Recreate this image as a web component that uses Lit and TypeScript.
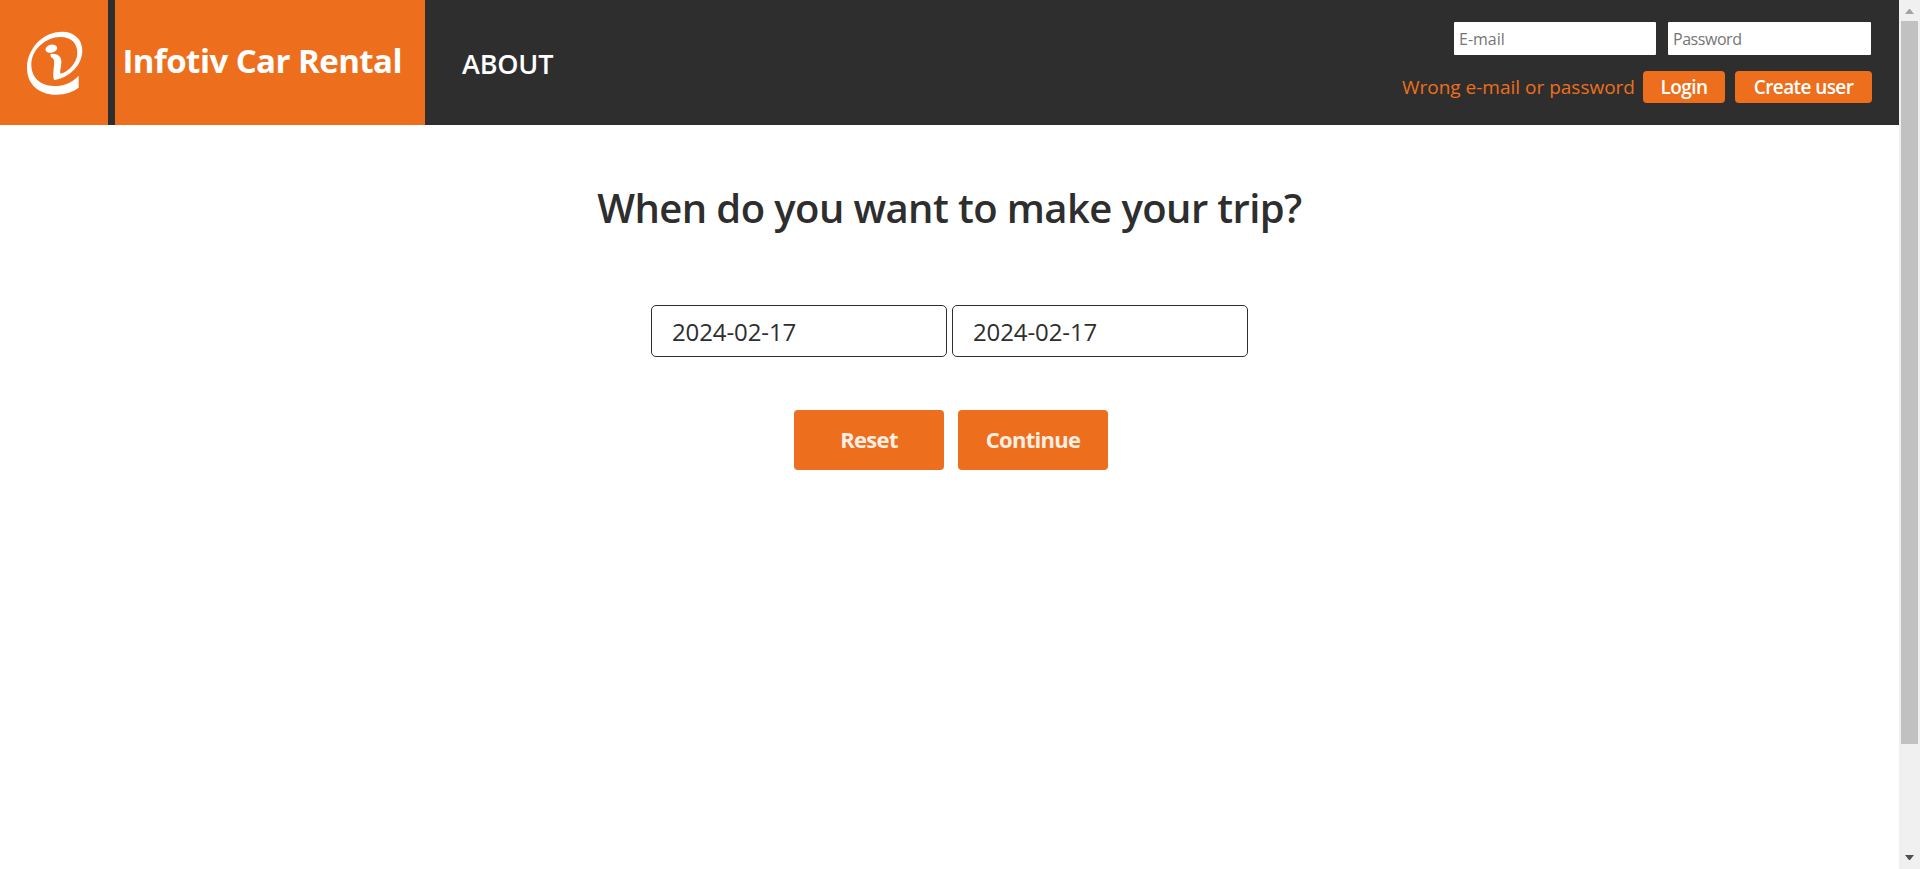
import { LitElement, html, css, svg } from "lit";
import { customElement, state } from "lit/decorators.js";

const mark = svg`
  <path d="M102 165C150 158 187 118 187 77C187 42 162 20 126 20C68 20 21 72 21 128C21 178 57 209 108 209C138 209 161 199 176 188V152C154 175 128 184 101 183C61 181 34 157 34 119C34 74 77 36 121 36C154 36 172 55 172 84C172 111 147 141 121 146C119 130 130 110 120 96C113 88 100 84 91 88L93 97C104 101 103 110 102 122C101 137 97 151 102 165Z"/>
  <ellipse cx="94" cy="71" rx="18" ry="12" transform="rotate(-14 94 71)"/>`;

@customElement("app-root")
export class AppRoot extends LitElement {
  @state() private start = "2024-02-17";
  @state() private end = "2024-02-17";

  static styles = css`
    :host { display: flex; height: 869px; background: #fff; color: #2e2e2e; font-family: "Trebuchet MS", "Open Sans", sans-serif; overflow: hidden; }
    * { box-sizing: border-box; }
    button, input { font-family: inherit; margin: 0; border: 0; outline: 0; }
    .page { flex: 1; min-width: 0; }
    header { display: flex; height: 125px; background: #2e2e2e; color: #fff; }
    .logo { width: 108.4px; background: #ed6e1c; }
    .logo svg { display: block; width: 70px; height: 75px; margin: 25px 0 0 20px; fill: #fff; }
    .title { width: 310px; margin-left: 6.6px; padding: 38px 0 0 7.5px; background: #ed6e1c; font-size: 33px; font-weight: 700; line-height: 46px; letter-spacing: -0.55px; white-space: nowrap; }
    .about { padding: 45px 0 0 37px; font-size: 27px; font-weight: 600; line-height: 38px; letter-spacing: -0.2px; }
    .account { margin-left: auto; padding: 22px 27px 0 0; display: flex; flex-direction: column; align-items: flex-end; }
    .fields { display: flex; gap: 12px; padding-right: 1px; }
    .fields input { height: 33px; padding: 0 5px; border-radius: 1px; background: #fff; font-size: 16px; }
    .email { width: 202px; }
    .password { width: 203px; }
    .fields input::placeholder { color: #757575; }
    .password::placeholder { letter-spacing: -0.45px; }
    .actions { display: flex; align-items: center; margin-top: 16px; }
    .error { color: #ed6e1c; font-size: 19px; line-height: 32px; margin-right: 8px; white-space: nowrap; }
    .actions button { height: 32px; padding: 0; border-radius: 4px; background: #ed6e1c; color: #fff; font-size: 19px; font-weight: 600; letter-spacing: -0.6px; line-height: 32px; }
    .login { width: 82px; margin-right: 10px; }
    .create { width: 137px; }
    main { display: flex; flex-direction: column; align-items: center; }
    h1 { margin: 55px 0 0; font-size: 40px; line-height: 56px; font-weight: 600; letter-spacing: -0.6px; white-space: nowrap; }
    .dates { display: flex; gap: 5px; margin-top: 69px; }
    .dates input { width: 296px; height: 52px; padding: 0 20px; border: 1px solid #2e2e2e; border-radius: 5px; background: #fff; color: #2e2e2e; font-size: 24px; letter-spacing: -0.1px; }
    .buttons { display: flex; gap: 14px; margin: 53px 0 0 3px; }
    .buttons button { width: 150px; height: 60px; padding: 0 0 2px; border-radius: 4px; background: #ed6e1c; color: #fdeee4; font-size: 22px; font-weight: 700; letter-spacing: -0.7px; }
    .scroll { width: 21px; background: #f0f0f0; display: flex; flex-direction: column; align-items: center; padding: 9px 0; }
    .scroll svg { display: block; width: 9px; height: 5px; }
    .up { fill: #a3a3a3; }
    .down { fill: #505050; margin-top: auto; }
    .thumb { width: 17px; height: 723px; margin-top: 7px; background: #c1c1c1; }
  `;

  render() {
    return html`
      <div class="page">
        <header>
          <div class="logo"><svg viewBox="0 0 210 225">${mark}</svg></div>
          <div class="title">Infotiv Car Rental</div>
          <div class="about">ABOUT</div>
          <div class="account">
            <div class="fields">
              <input class="email" placeholder="E-mail" />
              <input class="password" type="password" placeholder="Password" />
            </div>
            <div class="actions">
              <span class="error">Wrong e-mail or password</span>
              <button class="login">Login</button>
              <button class="create">Create user</button>
            </div>
          </div>
        </header>
        <main>
          <h1>When do you want to make your trip?</h1>
          <div class="dates">
            <input .value=${this.start} />
            <input .value=${this.end} />
          </div>
          <div class="buttons"><button>Reset</button><button>Continue</button></div>
        </main>
      </div>
      <div class="scroll">
        <svg class="up" viewBox="0 0 9 5"><path d="M0 5L4 0H5L9 5Z"/></svg>
        <div class="thumb"></div>
        <svg class="down" viewBox="0 0 9 5"><path d="M0 0H9L5 5H4Z"/></svg>
      </div>`;
  }
}
